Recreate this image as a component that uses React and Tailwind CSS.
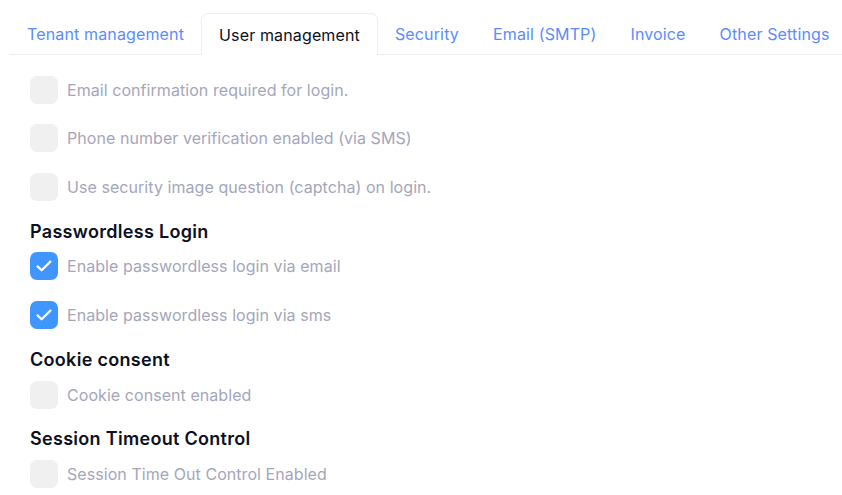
import React from 'react';

const tabs = ['Tenant management', 'User management', 'Security', 'Email (SMTP)', 'Invoice', 'Other Settings'];

function Check({ checked, label }) {
    return (
        <div className="flex items-center gap-[9px] h-[28px]">
            {checked ? (
                <span className="flex items-center justify-center w-[28px] h-[28px] rounded-[7px] bg-[#4096ff]">
                    <svg width="20" height="20" viewBox="0 0 20 20" fill="none">
                        <path d="M3.6 10.4l4 3.9L16.4 5.6" stroke="white" strokeWidth="2.2" strokeLinecap="round" strokeLinejoin="round" />
                    </svg>
                </span>
            ) : (
                <span className="w-[28px] h-[28px] rounded-[7px] bg-[#f0f0f0]" />
            )}
            <span className="text-[16px] tracking-[0.06px] text-[#a4a6bb] whitespace-nowrap">{label}</span>
        </div>
    );
}

function Heading({ children }) {
    return <div className="text-[18px] tracking-[0.3px] font-semibold text-[#0b1024] leading-[24px]">{children}</div>;
}

export default function App() {
    return (
        <div className="w-[842px] h-[495px] bg-white overflow-hidden" style={{ fontFamily: 'Inter, "Liberation Sans", sans-serif' }}>
            <div className="flex items-end ml-[9px] pl-px mt-[13px] h-[42px] border-b border-[#eeeeee]">
                {tabs.map((t, i) => i === 1 ? (
                    <div key={t} className="shrink-0 whitespace-nowrap h-[42px] px-[17px] flex items-center text-[16px] tracking-[0.14px] text-[#0b1024] bg-white border border-b-0 border-[#eeeeee] rounded-t-[7px] -mb-px">
                        {t}
                    </div>
                ) : (
                    <div key={t} className="shrink-0 whitespace-nowrap h-[41px] px-[17px] flex items-center text-[16px] tracking-[0.14px] text-[#5b8cff]">
                        {t}
                    </div>
                ))}
            </div>
            <div className="pl-[30px] pt-[21px] flex flex-col">
                <Check label="Email confirmation required for login." />
                <div className="h-[20px]" />
                <Check label="Phone number verification enabled (via SMS)" />
                <div className="h-[21px]" />
                <Check label="Use security image question (captcha) on login." />
                <div className="h-[19px]" />
                <Heading>Passwordless Login</Heading>
                <div className="h-[8px]" />
                <Check checked label="Enable passwordless login via email" />
                <div className="h-[21px]" />
                <Check checked label="Enable passwordless login via sms" />
                <div className="h-[19px]" />
                <Heading>Cookie consent</Heading>
                <div className="h-[9px]" />
                <Check label="Cookie consent enabled" />
                <div className="h-[18px]" />
                <Heading>Session Timeout Control</Heading>
                <div className="h-[9px]" />
                <Check label="Session Time Out Control Enabled" />
            </div>
        </div>
    );
}
